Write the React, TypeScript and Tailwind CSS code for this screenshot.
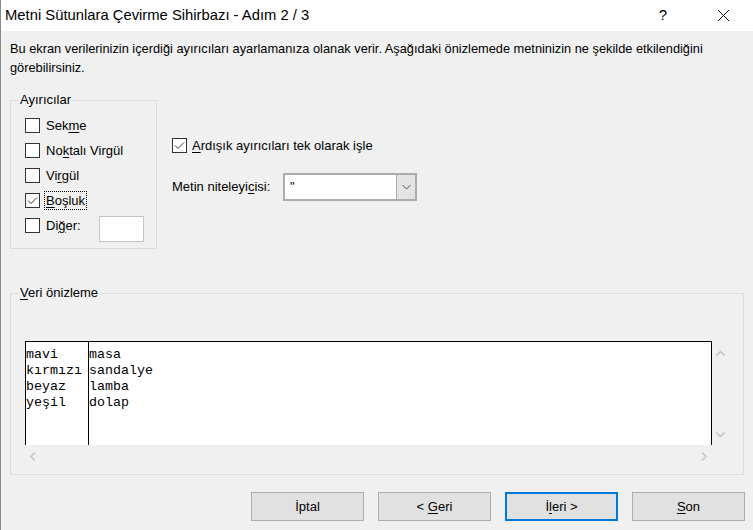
import React from 'react';

const Check = ({ checked }: { checked?: boolean }) => (
  <span className="w-[15px] h-[15px] border border-[#333333] bg-white flex items-center justify-center shrink-0">
    {checked && (
      <svg width="13" height="13" viewBox="0 0 13 13">
        <polyline points="2,6.5 5,9.5 11,3.5" fill="none" stroke="#333333" strokeWidth="1" />
      </svg>
    )}
  </span>
);

const U = ({ children }: { children: React.ReactNode }) => (
  <span className="underline underline-offset-2 decoration-1">{children}</span>
);

const Chevron = ({ d }: { d: string }) => (
  <svg width="11" height="11" viewBox="0 0 11 11">
    <polyline points={d} fill="none" stroke="#c6c6c6" strokeWidth="1.6" />
  </svg>
);

const Button = ({ children, primary }: { children: React.ReactNode; primary?: boolean }) => (
  <button
    className={
      primary
        ? 'w-[113px] h-[29px] bg-[#e1e1e1] border-2 border-[#0078d7] text-[13px] text-black'
        : 'w-[113px] h-[29px] bg-[#e1e1e1] border border-[#adadad] text-[13px] text-black'
    }
  >
    {children}
  </button>
);

export default function App() {
  const rows = [
    ['mavi', 'masa'],
    ['kırmızı', 'sandalye'],
    ['beyaz', 'lamba'],
    ['yeşil', 'dolap'],
  ];

  return (
    <div className="w-[753px] h-[530px] flex flex-col border-l border-[#8a8a8a] font-['Segoe_UI','Liberation_Sans',sans-serif] text-black overflow-hidden">
      {/* başlık çubuğu */}
      <div className="h-[31px] bg-white flex items-center shrink-0">
        <span className="pl-[4px] text-[14.8px]">Metni Sütunlara Çevirme Sihirbazı - Adım 2 / 3</span>
        <div className="ml-auto flex">
          <span className="w-[60px] flex justify-center text-[15px]">?</span>
          <span className="w-[60px] flex justify-center items-center">
            <svg width="13" height="13" viewBox="0 0 13 13">
              <path d="M1 1L12 12M12 1L1 12" stroke="#111" strokeWidth="1" />
            </svg>
          </span>
        </div>
      </div>

      <div className="flex-1 bg-[#f0f0f0] flex flex-col">
        <p className="pl-[9px] pt-[8px] text-[12.8px] leading-[19px]">
          Bu ekran verilerinizin içerdiği ayırıcıları ayarlamanıza olanak verir. Aşağıdaki önizlemede metninizin ne şekilde etkilendiğini
          <br />
          görebilirsiniz.
        </p>

        <div className="flex mt-[15px]">
          {/* Ayırıcılar */}
          <fieldset className="ml-[9px] w-[147px] border border-[#dcdcdc] pl-[14px] pt-[5px] pb-[6px] text-[13px]">
            <legend className="-ml-[7px] px-[2px] leading-[16px]">Ayırıcılar</legend>
            <div className="flex flex-col">
              <label className="h-[25px] flex items-center gap-[6px]">
                <Check />
                <span>
                  Sek<U>m</U>e
                </span>
              </label>
              <label className="h-[25px] flex items-center gap-[6px]">
                <Check />
                <span>
                  No<U>k</U>talı Virgül
                </span>
              </label>
              <label className="h-[25px] flex items-center gap-[6px]">
                <Check />
                <span>
                  Vi<U>r</U>gül
                </span>
              </label>
              <label className="h-[25px] flex items-center gap-[4px]">
                <Check checked />
                <span className="border border-dotted border-black px-[1px] leading-[17px]">
                  <U>B</U>oşluk
                </span>
              </label>
              <div className="flex items-start">
                <label className="h-[25px] w-[74px] flex items-center gap-[6px]">
                  <Check />
                  <span>
                    Di<U>ğ</U>er:
                  </span>
                </label>
                <div className="mt-[3px] w-[45px] h-[26px] bg-white border border-[#c4c4c4]" />
              </div>
            </div>
          </fieldset>

          {/* sağ seçenekler */}
          <div className="ml-[15px] mt-[41px] flex flex-col text-[13px]">
            <label className="h-[25px] flex items-center gap-[5px]">
              <Check checked />
              <span>
                <U>A</U>rdışık ayırıcıları tek olarak işle
              </span>
            </label>
            <div className="mt-[15px] flex items-center">
              <span className="w-[111px]">
                Metin niteleyi<U>c</U>isi:
              </span>
              <div className="w-[134px] h-[28px] flex border-2 border-[#acacac] bg-white">
                <span className="flex-1 pl-[5px] leading-[24px]">"</span>
                <span className="w-[19px] bg-[#e3e3e3] border-l border-[#acacac] flex items-center justify-center">
                  <svg width="9" height="6" viewBox="0 0 9 6">
                    <polyline points="0.5,1 4.5,5 8.5,1" fill="none" stroke="#555" strokeWidth="1" />
                  </svg>
                </span>
              </div>
            </div>
          </div>
        </div>

        {/* Veri önizleme */}
        <fieldset className="mt-[36px] ml-[9px] w-[734px] border border-[#dcdcdc] pl-[14px] pt-[40px] pb-[7px] text-[13px]">
          <legend className="-ml-[7px] px-[2px] leading-[16px]">
            <U>V</U>eri önizleme
          </legend>
          <div className="flex">
            <div className="w-[687px] h-[104px] bg-white border-t border-l border-r border-black flex font-['Courier_New','Liberation_Mono',monospace] text-[13.3333px] leading-[16px] pt-[5px]">
              <div className="w-[63px] border-r border-black -mt-[5px] pt-[5px]">
                {rows.map((r) => (
                  <div key={r[0]}>{r[0]}</div>
                ))}
              </div>
              <div className="flex-1">
                {rows.map((r) => (
                  <div key={r[1]}>{r[1]}</div>
                ))}
              </div>
            </div>
            <div className="w-[17px] flex flex-col items-center justify-between pt-[7px] pb-[5px]">
              <Chevron d="1.5,7.5 5.5,3.5 9.5,7.5" />
              <Chevron d="1.5,3.5 5.5,7.5 9.5,3.5" />
            </div>
          </div>
          <div className="w-[687px] h-[22px] flex items-center justify-between px-[3px]">
            <Chevron d="7,1.5 3,5.5 7,9.5" />
            <Chevron d="4,1.5 8,5.5 4,9.5" />
          </div>
        </fieldset>

        {/* butonlar */}
        <div className="mt-[17px] flex justify-end gap-[14px] pr-[8px]">
          <Button>İptal</Button>
          <Button>
            &lt; <U>G</U>eri
          </Button>
          <Button primary>
            İ<U>l</U>eri &gt;
          </Button>
          <Button>
            <U>S</U>on
          </Button>
        </div>
      </div>
    </div>
  );
}
